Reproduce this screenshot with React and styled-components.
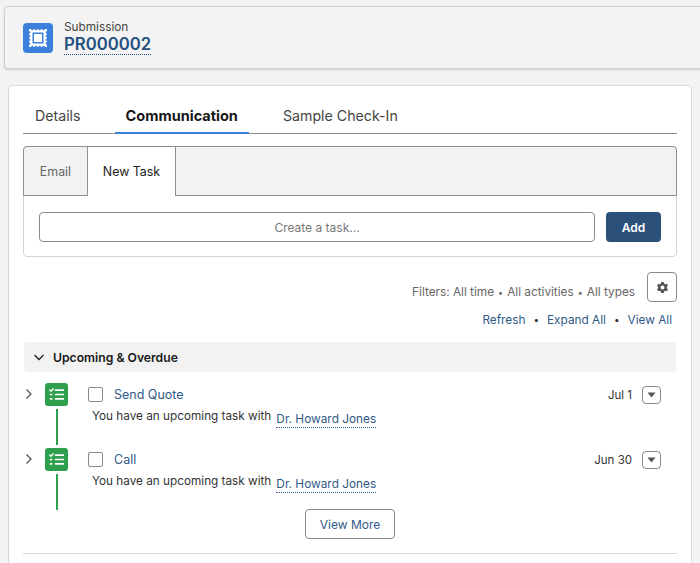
import React from 'react';
import styled, { createGlobalStyle } from 'styled-components';

const GlobalStyle = createGlobalStyle`
    html, body {
        margin: 0;
        height: 563px;
        overflow: hidden;
        background: #f3f3f3;
        font-family: Inter, "Liberation Sans", sans-serif;
    }
`;

const Page = styled.div`
    width: 700px;
    height: 563px;
    overflow: hidden;
    padding-top: 6px;
    box-sizing: border-box;
`;

const Header = styled.header`
    display: flex;
    align-items: center;
    gap: 11px;
    box-sizing: border-box;
    height: 63px;
    margin-left: 4px;
    margin-right: -4px;
    padding-left: 18px;
    background: #f3f3f3;
    border: 1px solid #cfcfcf;
    border-radius: 4px;
    box-shadow: 0 1px 2px rgba(0, 0, 0, 0.15);
`;

const RecordIcon = styled.div`
    display: flex;
    align-items: center;
    justify-content: center;
    width: 30px;
    height: 30px;
    border-radius: 4px;
    background: #3d80dc;
`;

const HeaderText = styled.div`
    display: flex;
    flex-direction: column;
    align-items: flex-start;
`;

const RecordType = styled.span`
    font-size: 11.8px;
    line-height: 14px;
    color: #444;
`;

const RecordName = styled.span`
    font-size: 16.7px;
    line-height: 20px;
    font-weight: 600;
    color: #24507f;
    border-bottom: 1px dotted #24507f;
`;

const Card = styled.main`
    box-sizing: border-box;
    height: 480px;
    margin: 16px 8px 0;
    padding: 14px 14px 0;
    background: #fff;
    border: 1px solid #d8d8d8;
    border-radius: 4px;
`;

const TabBar = styled.nav`
    display: flex;
    height: 33px;
    padding-left: 1px;
    border-bottom: 1px solid #8c8c8c;
`;

const Tab = styled.div`
    display: flex;
    align-items: center;
    box-sizing: border-box;
    height: 34px;
    padding: 0 11px ${p => (p.$active ? '1px' : '3px')};
    margin-right: ${p => p.$gap}px;
    font-size: ${p => (p.$active ? '14.5px' : '14.2px')};
    font-weight: ${p => (p.$active ? 700 : 400)};
    color: ${p => (p.$active ? '#181818' : '#444')};
    border-bottom: ${p => (p.$active ? '2.5px solid #3d80dc' : 'none')};
`;

const Composer = styled.section`
    margin-top: 12px;
    height: 111px;
    box-sizing: border-box;
    border: 1px solid #d4d4d4;
    border-radius: 4px;
`;

const ComposerTabs = styled.div`
    display: flex;
    height: 50px;
    margin: -1px -1px 0;
    box-sizing: border-box;
    background: #f2f2f2;
    border: 1px solid #8f8f8f;
    border-radius: 4px 4px 0 0;
`;

const ComposerTab = styled.div`
    display: flex;
    align-items: center;
    justify-content: center;
    box-sizing: border-box;
    width: ${p => p.$width}px;
    margin-bottom: ${p => (p.$active ? '-1px' : '0')};
    font-size: 12.4px;
    color: ${p => (p.$active ? '#222' : '#666')};
    background: ${p => (p.$active ? '#fff' : 'transparent')};
    border-left: ${p => (p.$active ? '1px solid #8f8f8f' : 'none')};
    border-right: ${p => (p.$active ? '1px solid #8f8f8f' : 'none')};
`;

const ComposerBody = styled.div`
    display: flex;
    gap: 11px;
    padding: 16px 15px 0;
`;

const TaskInput = styled.div`
    flex: 1;
    display: flex;
    align-items: center;
    justify-content: center;
    box-sizing: border-box;
    height: 30px;
    font-size: 12px;
    color: #777;
    border: 1px solid #8a8a8a;
    border-radius: 4px;
`;

const AddButton = styled.button`
    width: 55px;
    height: 30px;
    padding: 0;
    border: none;
    border-radius: 4px;
    background: #2b5079;
    color: #fff;
    font: 600 12px Inter, sans-serif;
`;

const FilterRow = styled.div`
    display: flex;
    align-items: center;
    justify-content: flex-end;
    gap: 12px;
    margin-top: 15px;
    height: 30px;
    font-size: 11.8px;
    color: #666;
`;

const FilterText = styled.span`
    position: relative;
    top: 5px;
`;

const FilterDot = styled.span`
    margin: 0 0.7px;
    font-size: 9px;
`;

const IconButton = styled.button`
    display: flex;
    align-items: center;
    justify-content: center;
    box-sizing: border-box;
    width: ${p => p.$size}px;
    height: ${p => p.$size - (p.$size < 25 ? 1 : 0)}px;
    padding: 0;
    background: #fff;
    border: 1px solid #8a8a8a;
    border-radius: 4px;
`;

const LinkRow = styled.div`
    display: flex;
    justify-content: flex-end;
    align-items: center;
    gap: 8px;
    height: 18px;
    margin-top: 9px;
    padding-right: 5px;
    font-size: 11.8px;
    color: #2f5a88;
`;

const Dot = styled.span`
    position: relative;
    top: -1px;
    color: #333;
    font-size: 10px;
`;

const SectionBar = styled.div`
    display: flex;
    align-items: center;
    gap: 8px;
    height: 30px;
    margin: 13px 1px 0;
    padding-left: 9px;
    background: #f2f2f2;
    border-radius: 4px;
    font-size: 12.2px;
    font-weight: 600;
    color: #181818;
`;

const TaskList = styled.div`
    padding-top: 11px;
`;

const TaskRow = styled.div`
    display: grid;
    grid-template-columns: 22px 23px 1fr;
    height: 65px;
`;

const Expander = styled.div`
    display: flex;
    justify-content: center;
    padding: 5px 10px 0 0;
    height: 14px;
`;

const Timeline = styled.div`
    display: flex;
    flex-direction: column;
    align-items: center;
    gap: 3px;
`;

const TaskIcon = styled.div`
    display: flex;
    align-items: center;
    justify-content: center;
    flex: none;
    width: 23px;
    height: 23px;
    border-radius: 3px;
    background: #2e9f4c;
`;

const TimelineLine = styled.div`
    width: 2px;
    flex: 1;
    margin-bottom: 3px;
    background: #2e9f4c;
`;

const TaskBody = styled.div`
    padding-left: 20px;
`;

const TaskHead = styled.div`
    display: flex;
    align-items: center;
    height: 23px;
    padding-right: 16px;
`;

const Checkbox = styled.span`
    box-sizing: border-box;
    width: 15px;
    height: 15px;
    margin-right: 11px;
    border: 1px solid #8a8a8a;
    border-radius: 2px;
`;

const TaskTitle = styled.span`
    flex: 1;
    font-size: 12.5px;
    color: #2f5a88;
`;

const TaskDate = styled.span`
    margin-right: 10px;
    font-size: 11.5px;
    color: #333;
`;

const TaskDetail = styled.div`
    display: flex;
    align-items: flex-start;
    gap: 5px;
    margin-top: 2px;
    padding-left: 4px;
    font-size: 11.75px;
    line-height: 16px;
    color: #333;
`;

const Person = styled.span`
    margin-top: 3px;
    font-size: 11.85px;
    color: #2f5a88;
    border-bottom: 1px dotted #2f5a88;
`;

const MoreRow = styled.div`
    display: flex;
    justify-content: center;
    margin-top: -4px;
`;

const MoreButton = styled.button`
    width: 90px;
    height: 30px;
    padding: 0;
    background: #fff;
    border: 1px solid #8a8a8a;
    border-radius: 4px;
    color: #2f5a88;
    font: 400 12px Inter, sans-serif;
`;

const Divider = styled.hr`
    margin: 14px 0 0;
    border: none;
    border-top: 1px solid #d8d8d8;
`;

const StampGlyph = () => (
    <svg width="22" height="22" viewBox="0 0 22 22" fill="none">
        <path
            fillRule="evenodd"
            fill="#fff"
            d="M2 2h2.2a1.3 1.3 0 0 0 2.6 0h1.1a1.3 1.3 0 0 0 2.6 0h.9a1.3 1.3 0 0 0 2.6 0h1.1a1.3 1.3 0 0 0 2.6 0H20v2.2a1.3 1.3 0 0 0 0 2.6v1.1a1.3 1.3 0 0 0 0 2.6v.9a1.3 1.3 0 0 0 0 2.6v1.1a1.3 1.3 0 0 0 0 2.6V20h-2.2a1.3 1.3 0 0 0-2.6 0h-1.1a1.3 1.3 0 0 0-2.6 0h-.9a1.3 1.3 0 0 0-2.6 0H6.8a1.3 1.3 0 0 0-2.6 0H2v-2.2a1.3 1.3 0 0 0 0-2.6v-1.1a1.3 1.3 0 0 0 0-2.6v-.9a1.3 1.3 0 0 0 0-2.6V6.8a1.3 1.3 0 0 0 0-2.6V2zm3.5 3.5v11h11v-11h-11z"
        />
        <rect x="7" y="7" width="8" height="8" fill="#fff" />
    </svg>
);

const TaskGlyph = () => (
    <svg width="15" height="13" viewBox="0 0 15 13" fill="none" stroke="#fff" strokeLinecap="round">
        <path d="M.8 2l1.2 1.2L4.2.8" strokeWidth="1.3" strokeLinejoin="round" />
        <path d="M6.5 2.2h8M6.5 6.5h8M6.5 10.8h8" strokeWidth="1.7" />
        <path d="M1.5 6.5h1.2M1.5 10.8h1.2" strokeWidth="1.7" />
    </svg>
);

const GearGlyph = () => (
    <svg width="13" height="13" viewBox="0 0 14 14">
        <path
            fillRule="evenodd"
            fill="#555"
            d="M5.7 1h2.6l.4 1.7 1.3.7 1.6-.5 1.3 2.2-1.2 1.2v1.4l1.2 1.2-1.3 2.2-1.6-.5-1.3.7L8.3 13H5.7l-.4-1.7-1.3-.7-1.6.5-1.3-2.2 1.2-1.2V6.3L1.1 5.1l1.3-2.2 1.6.5 1.3-.7L5.7 1zM7 4.9a2.1 2.1 0 1 0 0 4.2 2.1 2.1 0 0 0 0-4.2z"
        />
    </svg>
);

const Chevron = ({ down }) => (
    <svg width="12" height="12" viewBox="0 0 12 12" fill="none" stroke={down ? '#222' : '#555'} strokeWidth="1.3">
        <path d={down ? 'M1.5 4L6 8.5 10.5 4' : 'M3.5 1.5L8 6l-4.5 4.5'} />
    </svg>
);

const CaretGlyph = () => (
    <svg width="9" height="6" viewBox="0 0 9 6">
        <path fill="#555" d="M.5.5h8L4.5 5.5z" />
    </svg>
);

const Task = ({ title, date }) => (
    <TaskRow>
        <Expander><Chevron /></Expander>
        <Timeline>
            <TaskIcon><TaskGlyph /></TaskIcon>
            <TimelineLine />
        </Timeline>
        <TaskBody>
            <TaskHead>
                <Checkbox />
                <TaskTitle>{title}</TaskTitle>
                <TaskDate>{date}</TaskDate>
                <IconButton $size={19}><CaretGlyph /></IconButton>
            </TaskHead>
            <TaskDetail>
                You have an upcoming task with
                <Person>Dr. Howard Jones</Person>
            </TaskDetail>
        </TaskBody>
    </TaskRow>
);

export default function App() {
    return (
        <Page>
            <GlobalStyle />
            <Header>
                <RecordIcon><StampGlyph /></RecordIcon>
                <HeaderText>
                    <RecordType>Submission</RecordType>
                    <RecordName>PR000002</RecordName>
                </HeaderText>
            </Header>
            <Card>
                <TabBar>
                    <Tab $gap={23}>Details</Tab>
                    <Tab $active $gap={23}>Communication</Tab>
                    <Tab $gap={0}>Sample Check-In</Tab>
                </TabBar>
                <Composer>
                    <ComposerTabs>
                        <ComposerTab $width={63}>Email</ComposerTab>
                        <ComposerTab $active $width={89}>New Task</ComposerTab>
                    </ComposerTabs>
                    <ComposerBody>
                        <TaskInput>Create a task...</TaskInput>
                        <AddButton>Add</AddButton>
                    </ComposerBody>
                </Composer>
                <FilterRow>
                    <FilterText>
                        Filters: All time <FilterDot>•</FilterDot> All activities <FilterDot>•</FilterDot> All types
                    </FilterText>
                    <IconButton $size={30}><GearGlyph /></IconButton>
                </FilterRow>
                <LinkRow>
                    <span>Refresh</span>
                    <Dot>•</Dot>
                    <span>Expand All</span>
                    <Dot>•</Dot>
                    <span>View All</span>
                </LinkRow>
                <SectionBar>
                    <Chevron down />
                    Upcoming &amp; Overdue
                </SectionBar>
                <TaskList>
                    <Task title="Send Quote" date="Jul 1" />
                    <Task title="Call" date="Jun 30" />
                </TaskList>
                <MoreRow><MoreButton>View More</MoreButton></MoreRow>
                <Divider />
            </Card>
        </Page>
    );
}
